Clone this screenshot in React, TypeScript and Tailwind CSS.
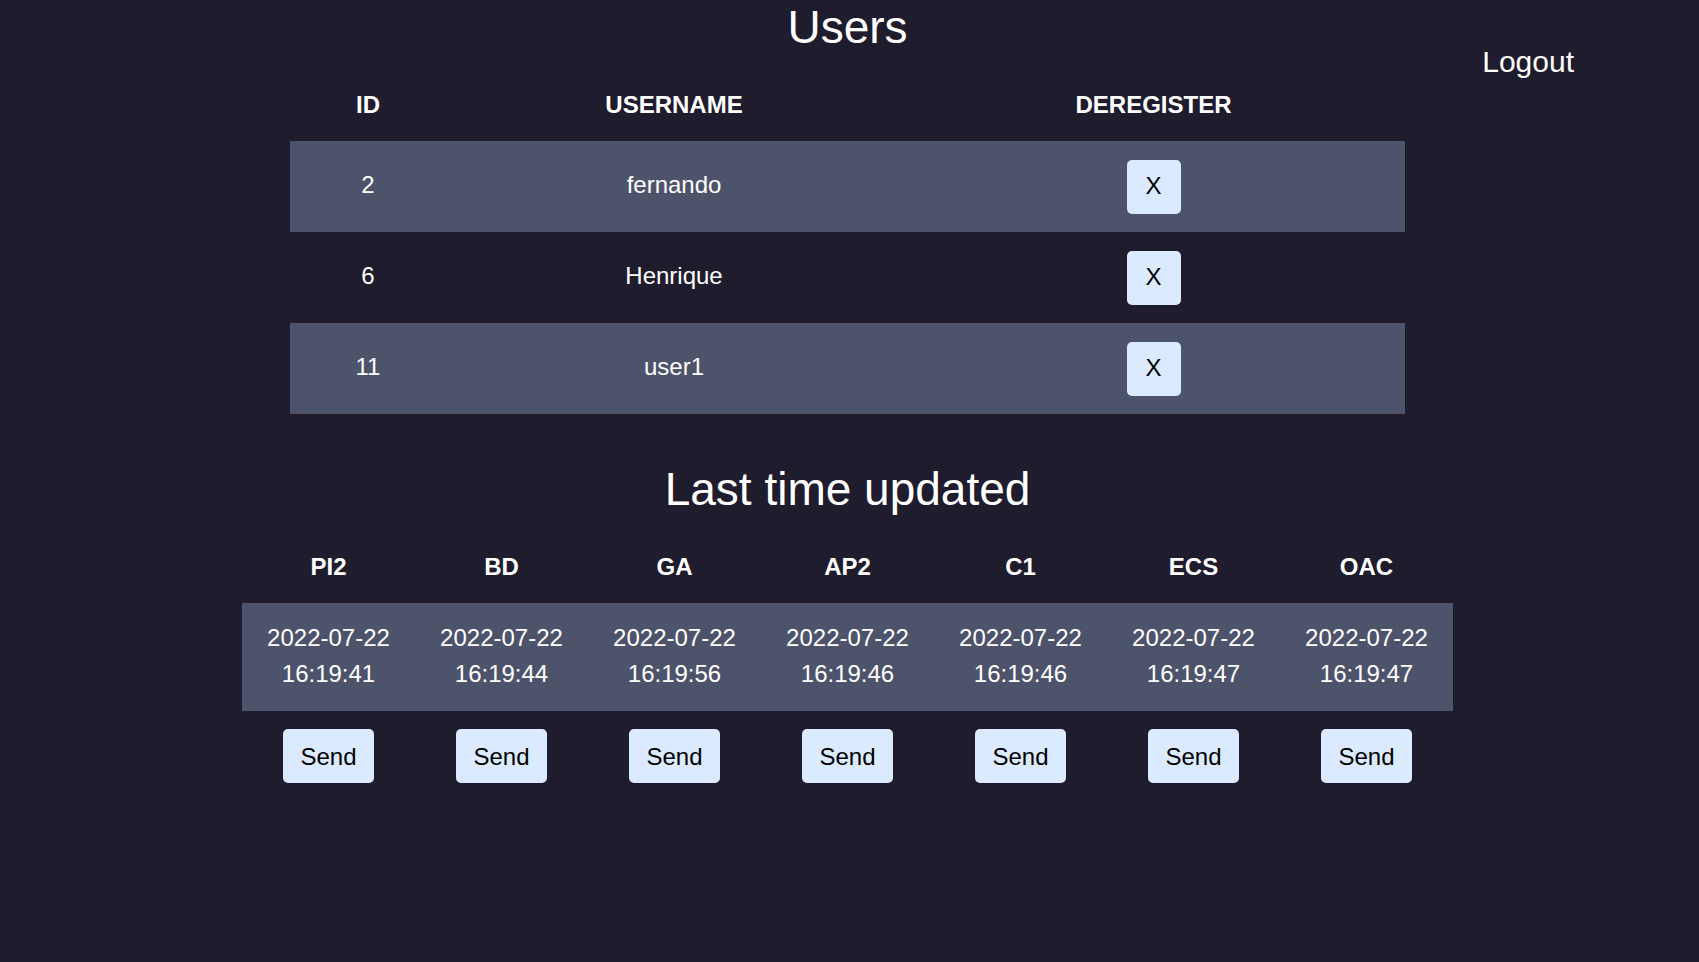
import React from "react";

interface User {
  id: number;
  username: string;
}

interface Subject {
  code: string;
  date: string;
  time: string;
}

const users: User[] = [
  { id: 2, username: "fernando" },
  { id: 6, username: "Henrique" },
  { id: 11, username: "user1" },
];

const subjects: Subject[] = [
  { code: "PI2", date: "2022-07-22", time: "16:19:41" },
  { code: "BD", date: "2022-07-22", time: "16:19:44" },
  { code: "GA", date: "2022-07-22", time: "16:19:56" },
  { code: "AP2", date: "2022-07-22", time: "16:19:46" },
  { code: "C1", date: "2022-07-22", time: "16:19:46" },
  { code: "ECS", date: "2022-07-22", time: "16:19:47" },
  { code: "OAC", date: "2022-07-22", time: "16:19:47" },
];

const App: React.FC = () => {
  return (
    <div className="min-h-screen bg-[#1f1c2d] text-white font-['Liberation_Sans',Arial,sans-serif]">
      <div className="grid grid-cols-[1fr_1211px_1fr] pr-[4px] pt-px">
        <div />

        <main className="flex flex-col items-center">
          <h1 className="text-[46px] leading-[52px] font-normal">Users</h1>

          {/* Users table */}
          <div className="mt-[16px] w-[1115px] grid grid-cols-[156px_456px_503px] text-[24px] leading-[27.6px] text-center">
            <div className="h-[72px] flex items-center justify-center font-bold">ID</div>
            <div className="h-[72px] flex items-center justify-center font-bold">USERNAME</div>
            <div className="h-[72px] flex items-center justify-center font-bold">DEREGISTER</div>

            {users.map((user, i) => {
              const band = i % 2 === 0 ? "bg-[#4e536c]" : "";
              return (
                <React.Fragment key={user.id}>
                  <div className={`h-[91px] pb-[3px] flex items-center justify-center ${band}`}>{user.id}</div>
                  <div className={`h-[91px] pb-[3px] flex items-center justify-center ${band}`}>{user.username}</div>
                  <div className={`h-[91px] flex items-center justify-center ${band}`}>
                    <button className="w-[54px] h-[54px] pb-px rounded-[5px] bg-[#dbeafe] text-black text-[24px]">
                      X
                    </button>
                  </div>
                </React.Fragment>
              );
            })}
          </div>

          <h1 className="mt-[49px] text-[46px] leading-[52px] font-normal">Last time updated</h1>

          {/* Subjects table */}
          <div className="mt-[16px] w-[1211px] grid grid-cols-7 text-[24px] text-center">
            {subjects.map((s) => (
              <div key={s.code} className="h-[72px] flex items-center justify-center font-bold leading-[27.6px]">
                {s.code}
              </div>
            ))}
            {subjects.map((s) => (
              <div
                key={s.code + "-time"}
                className="h-[108px] pb-[2px] bg-[#4e536c] flex flex-col items-center justify-center leading-[36px]"
              >
                <span>{s.date}</span>
                <span>{s.time}</span>
              </div>
            ))}
            {subjects.map((s) => (
              <div key={s.code + "-send"} className="pt-[18px] flex justify-center">
                <button className="w-[91px] h-[54px] pt-px rounded-[5px] bg-[#dbeafe] text-black text-[24px]">
                  Send
                </button>
              </div>
            ))}
          </div>
        </main>

        <div className="flex justify-end items-start">
          <a className="mt-[44px] mr-[121px] text-[30px] leading-[34px] cursor-pointer">Logout</a>
        </div>
      </div>
    </div>
  );
};

export default App;
